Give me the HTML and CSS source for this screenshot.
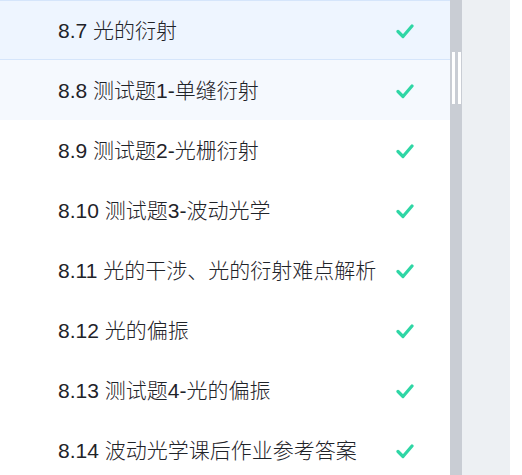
FILE: index.html
```html
<!DOCTYPE html>
<html lang="zh">
<head>
<meta charset="utf-8">
<link rel="stylesheet" href="styles.css">
</head>
<body>
<div class="page">
  <ul class="list">
    <li class="row active"><span class="title">8.7 光的衍射</span><svg class="check" viewBox="0 0 18 16"><path d="M2 8.5 L7 13.5 L16 3"/></svg></li>
    <li class="row hover"><span class="title">8.8 测试题1-单缝衍射</span><svg class="check" viewBox="0 0 18 16"><path d="M2 8.5 L7 13.5 L16 3"/></svg></li>
    <li class="row"><span class="title">8.9 测试题2-光栅衍射</span><svg class="check" viewBox="0 0 18 16"><path d="M2 8.5 L7 13.5 L16 3"/></svg></li>
    <li class="row"><span class="title">8.10 测试题3-波动光学</span><svg class="check" viewBox="0 0 18 16"><path d="M2 8.5 L7 13.5 L16 3"/></svg></li>
    <li class="row"><span class="title">8.11 光的干涉、光的衍射难点解析</span><svg class="check" viewBox="0 0 18 16"><path d="M2 8.5 L7 13.5 L16 3"/></svg></li>
    <li class="row"><span class="title">8.12 光的偏振</span><svg class="check" viewBox="0 0 18 16"><path d="M2 8.5 L7 13.5 L16 3"/></svg></li>
    <li class="row"><span class="title">8.13 测试题4-光的偏振</span><svg class="check" viewBox="0 0 18 16"><path d="M2 8.5 L7 13.5 L16 3"/></svg></li>
    <li class="row"><span class="title">8.14 波动光学课后作业参考答案</span><svg class="check" viewBox="0 0 18 16"><path d="M2 8.5 L7 13.5 L16 3"/></svg></li>
  </ul>
  <div class="scrollbar">
    <div class="thumb"><span class="bar"></span><span class="bar"></span></div>
  </div>
  <div class="side"></div>
</div>
</body>
</html>
```
FILE: styles.css
```css
html, body {
  margin: 0;
  padding: 0;
  background: #ffffff;
  overflow: hidden;
}
.page {
  display: flex;
  height: 475px;
  font-family: "Liberation Sans", "Noto Sans CJK SC", sans-serif;
}
.list {
  list-style: none;
  margin: 0;
  padding: 0;
  width: 450px;
  flex: none;
  overflow: hidden;
}
.row {
  box-sizing: border-box;
  height: 60px;
  display: flex;
  align-items: center;
  padding: 0 36px 2px 58px;
  color: #1f2329;
  font-size: 21px;
  font-weight: 300;
}
.row.active {
  background: #eef5ff;
  border-top: 1px solid #d5e5fb;
  border-bottom: 1px solid #d5e5fb;
}
.row.hover {
  background: #f5f9fe;
}
.title {
  flex: 1;
  white-space: nowrap;
}
.check {
  width: 18px;
  height: 16px;
  flex: none;
  margin-top: 4px;
}
.check path {
  fill: none;
  stroke: #2fd6a5;
  stroke-width: 3.2;
  stroke-linecap: round;
  stroke-linejoin: round;
}
.scrollbar {
  width: 12px;
  flex: none;
  background: #c9cdd4;
  padding-top: 52px;
  box-sizing: border-box;
}
.thumb {
  display: flex;
  gap: 3px;
  padding-left: 2px;
  height: 52px;
}
.bar {
  width: 3px;
  background: #ffffff;
}
.side {
  width: 48px;
  flex: none;
  background: #edf0f3;
}
```
